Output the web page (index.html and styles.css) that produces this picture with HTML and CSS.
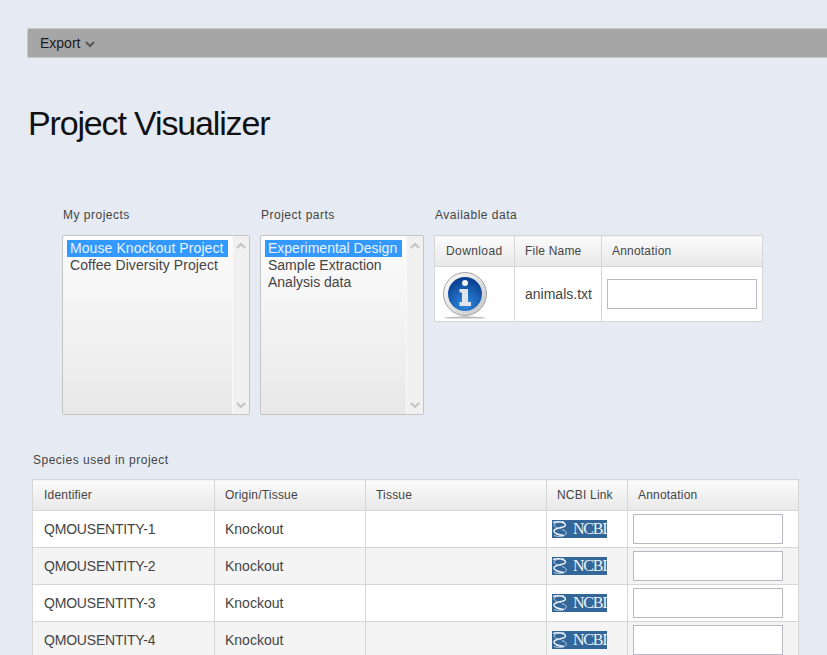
FILE: index.html
```html
<!DOCTYPE html>
<html lang="en">
<head>
  <meta charset="UTF-8">
  <meta name="viewport" content="width=device-width, initial-scale=1.0">
  <title>Project Visualizer</title>
  <link rel="stylesheet" href="styles.css">
</head>
<body>
  <svg class="defs" width="0" height="0">
    <symbol id="helix" viewBox="0 0 20 18">
      <path d="M1 2.500C6 1 13 2 13.500 5C14 8 3 7.500 2 10.500C1.500 13 6 15 12 15.500" fill="none" stroke="#eef3f8" stroke-width="1.400"/>
      <path d="M12 1.500C8 2 2 2.500 2 5C2 7 6 8 9 8.500M10 9.500C13 10.500 15 12 14 14C13 16.500 6 17 2 15.500" fill="none" stroke="#c3d5e6" stroke-width="1"/>
    </symbol>
    <symbol id="chev-up" viewBox="0 0 10 7">
      <path d="M1 6L5 2L9 6" fill="none" stroke="#c4c4c4" stroke-width="2.200"/>
    </symbol>
    <symbol id="chev-down" viewBox="0 0 10 7">
      <path d="M1 1L5 5L9 1" fill="none" stroke="#c4c4c4" stroke-width="2.200"/>
    </symbol>
  </svg>

  <div class="menubar">
    <span class="menu-item">Export
      <svg class="menu-arrow" width="10" height="7" viewBox="0 0 10 7"><path d="M1 1L5 5L9 1" fill="none" stroke="#555" stroke-width="2"/></svg>
    </span>
  </div>

  <h1 class="title">Project Visualizer</h1>

  <div class="top-row">
    <div class="panel panel-projects">
      <div class="caption">My projects</div>
      <div class="listbox">
        <div class="options">
          <div class="option selected">Mouse Knockout Project</div>
          <div class="option">Coffee Diversity Project</div>
        </div>
        <div class="scroll">
          <svg width="10" height="7"><use href="#chev-up"/></svg>
          <svg width="10" height="7"><use href="#chev-down"/></svg>
        </div>
      </div>
    </div>

    <div class="panel panel-parts">
      <div class="caption">Project parts</div>
      <div class="listbox">
        <div class="options">
          <div class="option selected">Experimental Design</div>
          <div class="option">Sample Extraction</div>
          <div class="option">Analysis data</div>
        </div>
        <div class="scroll">
          <svg width="10" height="7"><use href="#chev-up"/></svg>
          <svg width="10" height="7"><use href="#chev-down"/></svg>
        </div>
      </div>
    </div>

    <div class="panel panel-data">
      <div class="caption">Available data</div>
      <table class="grid data-grid">
        <thead>
          <tr><th class="col-download">Download</th><th class="col-file">File Name</th><th>Annotation</th></tr>
        </thead>
        <tbody>
          <tr>
            <td class="icon-cell">
              <svg class="info-icon" width="48" height="50" viewBox="0 0 48 50">
                <defs>
                  <linearGradient id="ring" x1="0" y1="0" x2="1" y2="1">
                    <stop offset="0" stop-color="#ffffff"/>
                    <stop offset="1" stop-color="#c4c4c4"/>
                  </linearGradient>
                  <radialGradient id="ball" cx="0.5" cy="0.8" r="0.75">
                    <stop offset="0" stop-color="#2f8ae0"/>
                    <stop offset="1" stop-color="#0a3f90"/>
                  </radialGradient>
                  <linearGradient id="floor" x1="0" y1="0" x2="0" y2="1">
                    <stop offset="0" stop-color="#999"/>
                    <stop offset="1" stop-color="#fff"/>
                  </linearGradient>
                </defs>
                <ellipse cx="24" cy="47" rx="21" ry="1.500" fill="url(#floor)"/>
                <circle cx="24" cy="23" r="21.500" fill="url(#ring)" stroke="#a4a4a4" stroke-width="1"/>
                <circle cx="24" cy="23" r="17" fill="url(#ball)"/>
                <circle cx="24" cy="12" r="3" fill="#f2f5f8"/>
                <path d="M18.500 18H27V31H30V35H18.500V31H21V21.500H18.500Z" fill="#dfe5ea"/>
              </svg>
            </td>
            <td>animals.txt</td>
            <td class="input-cell"><input class="annotation" type="text"></td>
          </tr>
        </tbody>
      </table>
    </div>
  </div>

  <div class="species">
    <div class="caption">Species used in project</div>
    <table class="grid species-grid">
      <thead>
        <tr>
          <th class="col-id">Identifier</th>
          <th class="col-origin">Origin/Tissue</th>
          <th class="col-tissue">Tissue</th>
          <th class="col-link">NCBI Link</th>
          <th>Annotation</th>
        </tr>
      </thead>
      <tbody>
        <tr>
          <td class="id-cell">QMOUSENTITY-1</td><td>Knockout</td><td></td>
          <td class="link-cell"><span class="ncbi"><svg width="20" height="18"><use href="#helix"/></svg>NCBI</span></td>
          <td class="input-cell"><input class="annotation" type="text"></td>
        </tr>
        <tr class="alt">
          <td class="id-cell">QMOUSENTITY-2</td><td>Knockout</td><td></td>
          <td class="link-cell"><span class="ncbi"><svg width="20" height="18"><use href="#helix"/></svg>NCBI</span></td>
          <td class="input-cell"><input class="annotation" type="text"></td>
        </tr>
        <tr>
          <td class="id-cell">QMOUSENTITY-3</td><td>Knockout</td><td></td>
          <td class="link-cell"><span class="ncbi"><svg width="20" height="18"><use href="#helix"/></svg>NCBI</span></td>
          <td class="input-cell"><input class="annotation" type="text"></td>
        </tr>
        <tr class="alt">
          <td class="id-cell">QMOUSENTITY-4</td><td>Knockout</td><td></td>
          <td class="link-cell"><span class="ncbi"><svg width="20" height="18"><use href="#helix"/></svg>NCBI</span></td>
          <td class="input-cell"><input class="annotation" type="text"></td>
        </tr>
      </tbody>
    </table>
  </div>
</body>
</html>
```

FILE: styles.css
```css
html, body {
  height: 655px;
  overflow: hidden;
}

body {
  margin: 0;
  padding: 28px 0 0 0;
  box-sizing: border-box;
  background: #e6ebf3;
  font-family: "Liberation Sans", Arial, sans-serif;
  font-size: 14px;
  color: #444;
}

.defs {
  display: block;
  height: 0;
}

.menubar {
  height: 30px;
  margin-left: 27px;
  box-sizing: border-box;
  background: #a6a6a6;
  border: 1px solid #c9c9c9;
  border-right: none;
  border-radius: 2px 0 0 2px;
  display: flex;
  align-items: center;
  padding-left: 12px;
}

.menu-item {
  color: #1c1c1c;
  display: flex;
  align-items: center;
  gap: 5px;
}

.menu-arrow {
  margin-top: 2px;
}

.title {
  margin: 45px 0 0 28px;
  font-size: 34px;
  line-height: 40px;
  font-weight: normal;
  letter-spacing: -1.15px;
  color: #111;
}

.top-row {
  display: flex;
  margin: 65px 0 0 62px;
}

.panel-projects {
  width: 188px;
  margin-right: 10px;
}

.panel-parts {
  width: 164px;
  margin-right: 10px;
}

.panel-data {
  width: 329px;
}

.caption {
  font-size: 12px;
  line-height: 14px;
  color: #444;
  margin-bottom: 13px;
  padding-left: 1px;
  letter-spacing: 0.5px;
}

.listbox {
  height: 180px;
  box-sizing: border-box;
  border: 1px solid #c4c4c4;
  border-radius: 2px;
  background: linear-gradient(#fcfcfc, #e8e8e8);
  display: flex;
}

.options {
  flex: 1;
  padding: 4px 4px 0 4px;
  min-width: 0;
}

.option {
  height: 17px;
  line-height: 17px;
  padding-left: 3px;
  font-size: 14px;
  white-space: nowrap;
  color: #444;
}

.panel-projects .option {
  letter-spacing: 0.08px;
}

.option.selected {
  background: #3399ff;
  color: #e9f3ff;
}

.scroll {
  width: 17px;
  flex: none;
  box-sizing: border-box;
  border-left: 1px solid #fafafa;
  background: #f0f0f0;
  display: flex;
  flex-direction: column;
  justify-content: space-between;
  align-items: center;
  padding: 6px 0 5px 0;
}

.grid {
  border-collapse: collapse;
  table-layout: fixed;
  background: #fff;
  font-size: 14px;
  color: #444;
}

.grid th, .grid td {
  border: 1px solid #d6d6d6;
  padding: 0 0 0 10px;
  text-align: left;
  box-sizing: border-box;
}

.grid th {
  height: 31px;
  font-size: 12px;
  font-weight: normal;
  background: linear-gradient(#fbfbfb, #e8e8e8);
  letter-spacing: 0.2px;
}

.grid td {
  height: 37px;
  white-space: nowrap;
}

.grid tr.alt td {
  background: #f4f4f4;
}

.grid .id-cell, .grid .col-id {
  padding-left: 11px;
}

.grid .id-cell {
  letter-spacing: -0.2px;
}

.data-grid {
  width: 329px;
}

.data-grid td {
  height: 55px;
}

.grid .col-download {
  width: 80px;
  padding-left: 11px;
  letter-spacing: 0.4px;
}

.col-file {
  width: 87px;
}

.grid .icon-cell {
  padding: 0 0 0 6px;
}

.info-icon {
  display: block;
  margin-top: 3px;
}

.grid .input-cell {
  padding: 0 0 0 5px;
}

.annotation {
  display: block;
  width: 150px;
  height: 30px;
  box-sizing: border-box;
  margin: 0;
  padding: 0;
  border: 1px solid #b9b9c4;
  background: #fff;
  outline: none;
}

.species {
  margin: 38px 0 0 32px;
}

.species .caption {
  margin-bottom: 12px;
}

.species-grid {
  width: 767px;
}

.col-id {
  width: 182px;
}

.col-origin {
  width: 151px;
}

.col-tissue {
  width: 181px;
}

.col-link {
  width: 81px;
}

.grid .link-cell {
  padding: 0 0 0 5px;
}

.ncbi {
  display: flex;
  align-items: center;
  width: 55px;
  height: 18px;
  background: #336699;
  font-family: "Liberation Serif", serif;
  font-size: 16px;
  color: #eef3f8;
  letter-spacing: -1.2px;
  overflow: hidden;
}

.ncbi svg {
  flex: none;
  margin-right: 1px;
}
```
